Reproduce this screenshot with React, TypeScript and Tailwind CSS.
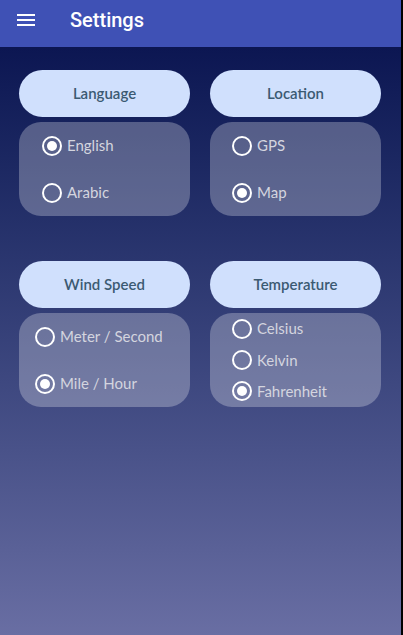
export default function App() {
  const groups = [
    { title: "Language", pad: "pl-[23px]", options: ["English", "Arabic"], selected: "English" },
    { title: "Location", pad: "pl-[22px]", options: ["GPS", "Map"], selected: "Map" },
    { title: "Wind Speed", pad: "pl-[16px]", options: ["Meter / Second", "Mile / Hour"], selected: "Mile / Hour" },
    { title: "Temperature", pad: "pl-[22px]", options: ["Celsius", "Kelvin", "Fahrenheit"], selected: "Fahrenheit" },
  ];

  return (
    <div className="flex h-[635px] w-[403px] bg-black">
      <div className="flex w-[401px] flex-col">
        {/* app bar */}
        <header className="flex h-[47px] shrink-0 items-center bg-[#3f51b5] pb-[8px] shadow-md">
          <svg width="24" height="24" viewBox="0 0 24 24" className="ml-[14px]" fill="#ffffff">
            <path d="M3 18h18v-2H3v2zm0-5h18v-2H3v2zm0-7v2h18V6H3z" />
          </svg>
          <h1 className="ml-[32px] text-[20px] font-medium text-white [font-family:Roboto,sans-serif]">
            Settings
          </h1>
        </header>

        <main className="flex-1 bg-gradient-to-b from-[#0c1652] to-[#696ea3] pl-[19px] pr-5 pt-[23px] [font-family:Lato,'Noto_Sans',sans-serif]">
          <div className="grid grid-cols-2 gap-x-5 gap-y-[45px]">
            {groups.map((group) => (
              <div key={group.title} className="flex flex-col gap-[5px]">
                <div className="flex h-[47px] items-center justify-center rounded-3xl bg-[#d0e0fd] text-[15px] font-semibold text-[#3b5a72]">
                  {group.title}
                </div>
                <div className={`flex h-[94px] flex-col rounded-[22px] bg-white/[0.27] ${group.pad}`}>
                  {group.options.map((opt) => (
                    <div key={opt} className="flex flex-1 items-center gap-[5px]">
                      <span className="flex h-5 w-5 items-center justify-center rounded-full border-2 border-white">
                        {opt === group.selected && <span className="h-[10px] w-[10px] rounded-full bg-white" />}
                      </span>
                      <span className="text-[15px] text-[#d4d5df]">{opt}</span>
                    </div>
                  ))}
                </div>
              </div>
            ))}
          </div>
        </main>
      </div>
    </div>
  );
}
